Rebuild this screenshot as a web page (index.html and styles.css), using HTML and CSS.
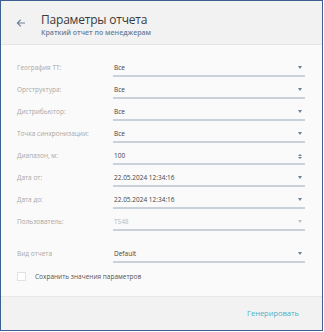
FILE: index.html
```html
<!DOCTYPE html>
<html lang="ru">
<head>
<meta charset="utf-8">
<link rel="stylesheet" href="styles.css">
</head>
<body>
<div class="frame">
  <header class="header">
    <svg class="back" width="10" height="10" viewBox="0 0 10 10"><path d="M9 5H1.5M4.8 1.6L1.4 5l3.4 3.4" fill="none" stroke="#6d8198" stroke-width="1.2"/></svg>
    <div class="titles">
      <div class="title">Параметры отчета</div>
      <div class="subtitle">Краткий отчет по менеджерам</div>
    </div>
  </header>
  <main class="body">
    <div class="row"><div class="label">География ТТ:</div><div class="field"><span>Все</span><i class="caret"></i></div></div>
    <div class="row"><div class="label">Оргструктура:</div><div class="field"><span>Все</span><i class="caret"></i></div></div>
    <div class="row"><div class="label">Дистрибьютор:</div><div class="field"><span>Все</span><i class="caret"></i></div></div>
    <div class="row"><div class="label">Точка синхронизации:</div><div class="field"><span>Все</span><i class="caret"></i></div></div>
    <div class="row"><div class="label">Диапазон, м:</div><div class="field"><span>100</span><i class="spin"><b class="up"></b><b class="down"></b></i></div></div>
    <div class="row"><div class="label">Дата от:</div><div class="field"><span>22.05.2024 12:34:16</span><i class="caret"></i></div></div>
    <div class="row"><div class="label">Дата до:</div><div class="field"><span>22.05.2024 12:34:16</span><i class="caret"></i></div></div>
    <div class="row disabled"><div class="label">Пользователь:</div><div class="field"><span>TS48</span><i class="caret"></i></div></div>
    <div class="row spaced"><div class="label">Вид отчета</div><div class="field"><span>Default</span><i class="caret"></i></div></div>
    <label class="check"><span class="box"></span><span>Сохранить значения параметров</span></label>
  </main>
  <footer class="footer">
    <span class="btn">Генерировать</span>
  </footer>
</div>
</body>
</html>
```
FILE: styles.css
```css
* { box-sizing: border-box; }
html, body { margin: 0; padding: 0; background: #ffffff; }
body { font-family: "Open Sans", "Noto Sans", sans-serif; }
.frame {
  width: 323px;
  height: 331px;
  border: 1px solid #3e5f91;
  display: flex;
  flex-direction: column;
  background: #fafafa;
}
.header {
  height: 44px;
  flex: none;
  background: #f2f2f2;
  border-bottom: 1px solid #e5e5e5;
  display: flex;
  align-items: flex-start;
  padding: 11px 0 0 15px;
}
.back { margin-top: 6px; margin-right: 15px; }
.titles { display: flex; flex-direction: column; }
.title { font-size: 12px; line-height: 15px; color: #3a3a3a; letter-spacing: -0.2px; }
.subtitle { font-size: 7px; line-height: 9px; color: #6b8199; font-weight: 600; margin-top: 1px; }
.body {
  flex: 1;
  padding: 10px 17px 0 16px;
  display: flex;
  flex-direction: column;
}
.row {
  height: 22px;
  display: grid;
  grid-template-columns: 96px 1fr;
  align-items: end;
}
.row.spaced { margin-top: 10px; }
.label {
  font-size: 6.5px;
  color: #a8a8a8;
  line-height: 10px;
  padding-bottom: 4px;
}
.field {
  height: 16px;
  border-bottom: 2px solid #c9d1da;
  display: flex;
  align-items: flex-end;
  justify-content: space-between;
  padding: 0 3px 2px 1px;
  font-size: 6.5px;
  line-height: 10px;
  color: #444;
}
.caret {
  width: 0; height: 0;
  border-left: 2.5px solid transparent;
  border-right: 2.5px solid transparent;
  border-top: 3px solid #6e7f92;
  margin-bottom: 4px;
}
.spin { display: flex; flex-direction: column; gap: 1px; margin-bottom: 2px; }
.spin b { width: 0; height: 0; border-left: 2.5px solid transparent; border-right: 2.5px solid transparent; }
.spin .up { border-bottom: 2.5px solid #6e7f92; }
.spin .down { border-top: 2.5px solid #6e7f92; }
.disabled .field span { color: #b9b9b9; }
.disabled .caret { border-top-color: #b8c2cc; }
.check {
  display: flex;
  align-items: center;
  gap: 9px;
  margin-top: 9px;
  font-size: 6.5px;
  color: #555;
}
.box {
  width: 9px; height: 9px;
  border: 1px solid #e2e2e2;
  background: #fff;
}
.footer {
  height: 34px;
  flex: none;
  background: #f2f2f2;
  border-top: 1px solid #e8e8e8;
  display: flex;
  align-items: center;
  justify-content: flex-end;
  padding: 0 23px 1px 0;
}
.btn { font-size: 7.5px; color: #47b2c8; }
```
